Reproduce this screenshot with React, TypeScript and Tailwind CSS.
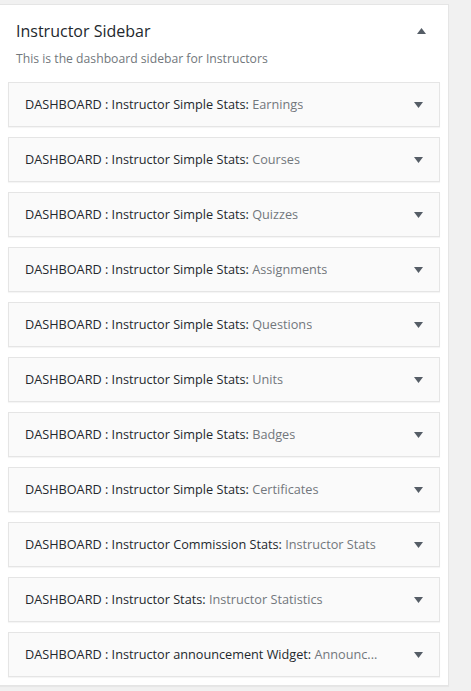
const widgets: [string, string][] = [
  ['DASHBOARD : Instructor Simple Stats:', 'Earnings'],
  ['DASHBOARD : Instructor Simple Stats:', 'Courses'],
  ['DASHBOARD : Instructor Simple Stats:', 'Quizzes'],
  ['DASHBOARD : Instructor Simple Stats:', 'Assignments'],
  ['DASHBOARD : Instructor Simple Stats:', 'Questions'],
  ['DASHBOARD : Instructor Simple Stats:', 'Units'],
  ['DASHBOARD : Instructor Simple Stats:', 'Badges'],
  ['DASHBOARD : Instructor Simple Stats:', 'Certificates'],
  ['DASHBOARD : Instructor Commission Stats:', 'Instructor Stats'],
  ['DASHBOARD : Instructor Stats:', 'Instructor Statistics'],
  ['DASHBOARD : Instructor announcement Widget:', 'Announc...'],
]

function Caret({ up }: { up?: boolean }) {
  return (
    <svg width="9" height="6" viewBox="0 0 9 6" className="shrink-0">
      <path d={up ? 'M0 6 L4.5 0 L9 6 Z' : 'M0 0 L9 0 L4.5 6 Z'} fill="#555d66" />
    </svg>
  )
}

export default function App() {
  return (
    <div className="min-h-[691px] bg-[#f1f1f1] pt-1 font-['Open_Sans',sans-serif]">
      <div className="w-[449px] border border-l-0 border-[#e5e5e5] bg-white pb-[8px] shadow-[0_1px_1px_rgba(0,0,0,0.04)]">
        <div className="flex items-center justify-between pl-4 pr-[22px] pt-[14px]">
          <h2 className="text-[16px] leading-[24px] text-[#23282d]">Instructor Sidebar</h2>
          <Caret up />
        </div>
        <p className="pl-4 pt-[7px] text-[12.2px] leading-[18px] text-[#72777c]">This is the dashboard sidebar for Instructors</p>
        <div className="flex flex-col gap-[10px] pl-2 pt-[14px]">
          {widgets.map(([a, b], i) => (
            <div key={i} className="flex h-[45px] w-[432px] items-center justify-between border border-[#e5e5e5] bg-[#fafafa] pl-4 pr-4 shadow-[0_1px_1px_rgba(0,0,0,0.04)]">
              <span className="truncate text-[12.7px] text-[#23282d]">
                {a} <span className="text-[#72777c]">{b}</span>
              </span>
              <Caret />
            </div>
          ))}
        </div>
      </div>
    </div>
  )
}
